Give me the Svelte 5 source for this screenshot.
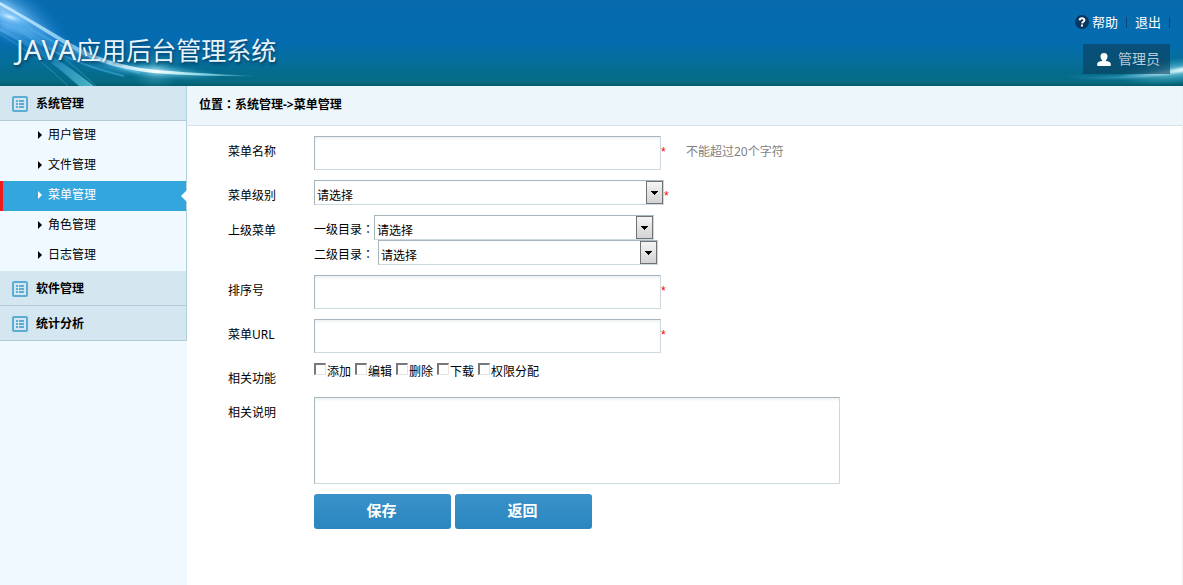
<script>
let groups = [
    { title: "系统管理", items: ["用户管理", "文件管理", "菜单管理", "角色管理", "日志管理"] },
    { title: "软件管理", items: [] },
    { title: "统计分析", items: [] }
];

let actions = ["添加", "编辑", "删除", "下载", "权限分配"];

let current = "菜单管理";
let name = "";
let sort = "";
let url = "";
let remark = "";
let checked = [];
</script>

{#snippet arrow()}
    <svg class="arrow" width="17" height="23" viewBox="0 0 17 23" aria-hidden="true">
        <defs>
            <linearGradient id="arrowFill" x1="0" y1="0" x2="0" y2="1">
                <stop offset="0" stop-color="#f5f5f5" />
                <stop offset="1" stop-color="#d2d2d2" />
            </linearGradient>
        </defs>
        <rect x="0.5" y="0.5" width="16" height="22" fill="url(#arrowFill)" stroke="#6f7377" />
        <path d="M5 10h7v1h-1v1h-1v1h-1v1h-1v-1h-1v-1h-1v-1h-1z" fill="#000" />
    </svg>
{/snippet}

<div class="page">
    <header>
        <svg class="art art-left" width="300" height="86" viewBox="0 0 300 86" aria-hidden="true">
            <defs>
                <radialGradient id="corner">
                    <stop offset="0" stop-color="#d9f3ff" stop-opacity="1" />
                    <stop offset="0.3" stop-color="#7cc4fa" stop-opacity="0.8" />
                    <stop offset="1" stop-color="#1b80d6" stop-opacity="0" />
                </radialGradient>
                <radialGradient id="flare">
                    <stop offset="0" stop-color="#fff" />
                    <stop offset="0.25" stop-color="#9fe6fa" stop-opacity="0.8" />
                    <stop offset="1" stop-color="#28a3c8" stop-opacity="0" />
                </radialGradient>
                <linearGradient id="beam" gradientUnits="userSpaceOnUse" x1="0" y1="0" x2="270" y2="0">
                    <stop offset="0" stop-color="#c5eaff" />
                    <stop offset="0.3" stop-color="#8fd0f2" stop-opacity="0.8" />
                    <stop offset="0.58" stop-color="#f4ffff" />
                    <stop offset="0.78" stop-color="#8de0f0" stop-opacity="0.8" />
                    <stop offset="1" stop-color="#3aa5bd" stop-opacity="0" />
                </linearGradient>
                <linearGradient id="sheet" gradientUnits="userSpaceOnUse" x1="0" y1="10" x2="150" y2="74">
                    <stop offset="0" stop-color="#6bbcff" stop-opacity="0.7" />
                    <stop offset="0.5" stop-color="#2f95dd" stop-opacity="0.45" />
                    <stop offset="1" stop-color="#2aa3cf" stop-opacity="0.3" />
                </linearGradient>
                <linearGradient id="fan" gradientUnits="userSpaceOnUse" x1="0" y1="20" x2="90" y2="86">
                    <stop offset="0" stop-color="#55adf0" stop-opacity="0.8" />
                    <stop offset="0.45" stop-color="#2b8ed0" stop-opacity="0.4" />
                    <stop offset="1" stop-color="#5fcfe2" stop-opacity="0.75" />
                </linearGradient>
                <filter id="soft"><feGaussianBlur stdDeviation="0.7" /></filter>
                <filter id="softer" x="-20%" y="-20%" width="140%" height="140%"><feGaussianBlur stdDeviation="3" /></filter>
            </defs>
            <path d="M0 0Q34 20 62 39Q104 66 156 71Q100 76 50 50Q24 34 0 30z" fill="url(#sheet)" filter="url(#softer)" />
            <ellipse cx="4" cy="12" rx="70" ry="30" fill="url(#corner)" opacity="0.8" transform="rotate(28 4 12)" />
            <ellipse cx="10" cy="17" rx="32" ry="9" fill="url(#corner)" transform="rotate(18 10 17)" />
            <g filter="url(#soft)">
                <path d="M0 28Q40 44 94 86L79 86Q42 52 0 31z" fill="url(#fan)" />
                <path d="M0 34Q38 56 68 86M24 30Q60 52 96 86" fill="none" stroke="#5bbce4" stroke-opacity="0.4" />
                <path d="M20 22Q74 58 140 73M12 24Q56 60 124 76" fill="none" stroke="#4ab4ea" stroke-opacity="0.5" stroke-width="2" />
            </g>
            <ellipse cx="156" cy="71" rx="66" ry="8" fill="url(#flare)" opacity="0.7" transform="rotate(5 156 71)" />
            <ellipse cx="156" cy="71" rx="26" ry="20" fill="url(#flare)" opacity="0.35" />
            <path d="M0 2Q34 21 62 38Q104 65 156 70Q220 75 264 76Q210 77 154 73Q98 68 58 40Q30 22 0 5z" fill="url(#beam)" filter="url(#soft)" />
        </svg>
        <svg class="art art-right" width="123" height="86" viewBox="0 0 123 86" aria-hidden="true">
            <defs>
                <linearGradient id="tail" x1="0" y1="0" x2="1" y2="0">
                    <stop offset="0" stop-color="#2f9cc0" stop-opacity="0" />
                    <stop offset="0.5" stop-color="#52b6d8" stop-opacity="0.7" />
                    <stop offset="1" stop-color="#f2fdff" />
                </linearGradient>
                <radialGradient id="haze">
                    <stop offset="0" stop-color="#8fdcf0" stop-opacity="0.9" />
                    <stop offset="1" stop-color="#3fb0c8" stop-opacity="0" />
                </radialGradient>
                <filter id="softTail"><feGaussianBlur stdDeviation="0.8" /></filter>
            </defs>
            <ellipse cx="118" cy="71" rx="60" ry="13" fill="url(#haze)" transform="rotate(-6 118 71)" />
            <path d="M2 75Q68 80 126 67L126 71Q70 82 2 78z" fill="url(#tail)" filter="url(#softTail)" />
        </svg>
        <h1><span>JAVA</span>应用后台管理系统</h1>
        <div class="top-right">
            <nav class="links">
                <a href="#help">
                    <svg width="14" height="14" viewBox="0 0 14 14" aria-hidden="true">
                        <circle cx="7" cy="7" r="7" fill="#08365f" />
                        <path d="M4.6 5.4C4.7 2.4 9.5 2.500 9.400 5.200C9.300 6.700 7.200 6.800 7.100 8.400" fill="none" stroke="#fff" stroke-width="2" />
                        <rect x="6" y="9.500" width="2" height="2" fill="#fff" />
                    </svg>
                    帮助
                </a>
                <a href="#logout">退出</a>
            </nav>
            <div class="user">
                <svg width="14" height="13" viewBox="0 0 14 13" aria-hidden="true">
                    <path d="M7 0C9.400 0 10.700 1.600 10.500 3.700C10.300 5.500 9.600 6.700 8.900 7.300V8C10.900 8.400 13.800 8.900 13.800 11V12C13.800 12.700 13.400 13 12.800 13H1.200C0.600 13 0.200 12.700 0.200 12V11C0.200 8.900 3.100 8.400 5.100 8V7.300C4.400 6.700 3.700 5.500 3.500 3.700C3.300 1.600 4.600 0 7 0z" fill="#fff" />
                </svg>
                管理员
            </div>
        </div>
    </header>

    <div class="body">
        <aside>
            {#each groups as group}
            <div class="group">
                <div class="group-title">
                    <svg width="16" height="16" viewBox="0 0 16 16" aria-hidden="true">
                        <rect x="1" y="1" width="14" height="14" rx="1" fill="none" stroke="#5badd3" stroke-width="2" />
                        <path d="M4 4h2v2H4zM7 4h5v2H7zM4 7h2v2H4zM7 7h5v2H7zM4 10h2v2H4zM7 10h5v2H7z" fill="#5badd3" />
                    </svg>
                    {group.title}
                </div>
                {#if group.items.length}
                <ul>
                    {#each group.items as item}
                    <li class:active={item == current}>
                        <a href="#menu">
                            <svg width="4" height="8" viewBox="0 0 4 8" aria-hidden="true">
                                <path d="M0 0L4 4L0 8z" fill="currentColor" />
                            </svg>
                            {item}
                        </a>
                    </li>
                    {/each}
                </ul>
                {/if}
            </div>
            {/each}
        </aside>

        <main>
            <div class="place">位置<span class="colon">：</span>系统管理-&gt;菜单管理</div>
            <form onsubmit={(e) => e.preventDefault()}>
                <div class="row">
                    <label class="label" for="name">菜单名称</label>
                    <input class="text" id="name" type="text" bind:value={name} />
                    <span class="star">*</span>
                    <span class="hint">不能超过20个字符</span>
                </div>
                <div class="row">
                    <label class="label" for="level">菜单级别</label>
                    <span class="select wide">
                        <select id="level"><option>请选择</option></select>
                        {@render arrow()}
                    </span>
                    <span class="star">*</span>
                </div>
                <div class="row">
                    <span class="label">上级菜单</span>
                    <div class="parents">
                        <div class="parent">
                            <label for="first">一级目录<span class="colon">：</span></label>
                            <span class="select">
                                <select id="first"><option>请选择</option></select>
                                {@render arrow()}
                            </span>
                        </div>
                        <div class="parent second">
                            <label for="second">二级目录<span class="colon">：</span></label>
                            <span class="select">
                                <select id="second"><option>请选择</option></select>
                                {@render arrow()}
                            </span>
                        </div>
                    </div>
                </div>
                <div class="row">
                    <label class="label" for="sort">排序号</label>
                    <input class="text" id="sort" type="text" bind:value={sort} />
                    <span class="star">*</span>
                </div>
                <div class="row">
                    <label class="label" for="url">菜单URL</label>
                    <input class="text" id="url" type="text" bind:value={url} />
                    <span class="star">*</span>
                </div>
                <div class="row">
                    <span class="label">相关功能</span>
                    <div class="checks">
                        {#each actions as action}
                        <label><input type="checkbox" value={action} bind:group={checked} />{action}</label>
                        {/each}
                    </div>
                </div>
                <div class="row">
                    <label class="label" for="remark">相关说明</label>
                    <textarea id="remark" bind:value={remark}></textarea>
                </div>
                <div class="buttons">
                    <button type="submit">保存</button>
                    <button type="button">返回</button>
                </div>
            </form>
        </main>
    </div>
</div>

<style>
    :global(body) {
        margin: 0;
        background: #fff;
    }

    .page {
        min-height: 100vh;
        display: flex;
        flex-direction: column;
        font-family: "Noto Sans", "Noto Sans CJK SC", sans-serif;
        font-size: 12px;
        line-height: 18px;
        color: #000;
    }

    a {
        color: inherit;
        text-decoration: none;
    }

    svg {
        flex-shrink: 0;
    }

    /* the TC face sets the full-width colon in the middle of its box */
    .colon {
        font-family: "Noto Sans CJK TC", sans-serif;
        line-height: 1;
    }

    /* header */
    header {
        position: relative;
        display: flex;
        justify-content: space-between;
        height: 86px;
        overflow: hidden;
        background: linear-gradient(#066aad 0, #056cb1 40px, #056e9c 60px, #066a82 82px, #045c6c 86px);
    }

    .art {
        position: absolute;
        top: 0;
    }

    .art-left {
        left: 0;
    }

    .art-right {
        right: 0;
    }

    h1 {
        position: relative;
        margin: 0;
        padding: 31px 0 0 16px;
        font-size: 25px;
        line-height: 36px;
        font-weight: normal;
        color: #e8f4fb;
        text-shadow: 1px 2px 3px rgba(0, 30, 60, 0.6);
        white-space: nowrap;
    }

    h1 span {
        font-size: 28px;
        font-kerning: none;
    }

    .top-right {
        position: relative;
        display: flex;
        flex-direction: column;
        align-items: flex-end;
        gap: 13px;
        padding: 13px 13px 0 0;
        color: #fff;
        font-size: 13px;
    }

    .links {
        display: flex;
    }

    .links a {
        display: flex;
        align-items: center;
        gap: 3px;
        padding: 0 9px 0 8px;
        background: linear-gradient(#0a4577, #0a4577) right center / 1px 11px no-repeat;
    }

    .user {
        display: flex;
        align-items: center;
        gap: 7px;
        height: 30px;
        padding: 0 10px 0 14px;
        background: rgba(10, 60, 90, 0.6);
        font-size: 14px;
        color: #b9cad8;
    }

    /* sidebar */
    .body {
        flex: 1;
        display: flex;
    }

    aside {
        width: 187px;
        flex-shrink: 0;
        background: #f0f9ff;
    }

    .group {
        border-right: 1px solid #b0d0dc;
    }

    .group-title {
        display: flex;
        align-items: center;
        gap: 8px;
        height: 32px;
        padding: 2px 0 0 12px;
        border-bottom: 1px solid #b4cbd5;
        background: #d4e7f0;
        font-weight: bold;
    }

    ul {
        margin: 0;
        padding: 0;
        list-style: none;
    }

    li a {
        display: flex;
        align-items: center;
        gap: 6px;
        height: 28px;
        padding: 0 0 2px 38px;
    }

    li.active {
        position: relative;
        background: #33a6dd;
        border-left: 3px solid #ef1c1c;
        color: #fff;
    }

    li.active a {
        padding-left: 35px;
    }

    /* notch pointing into the active item */
    li.active::after {
        content: "";
        position: absolute;
        right: -1px;
        top: 9px;
        border: 6px solid transparent;
        border-left: 0;
        border-right-color: #fff;
    }

    /* content */
    main {
        flex: 1;
        min-width: 0;
        border-right: 1px solid #edf1f3;
    }

    .place {
        height: 39px;
        line-height: 38px;
        padding-left: 12px;
        border-bottom: 1px solid #d5e4eb;
        background: #edf6fb;
        font-weight: bold;
    }

    form {
        display: flex;
        flex-direction: column;
        gap: 10px;
        padding: 10px 0 10px 41px;
    }

    .row {
        display: flex;
        align-items: flex-start;
    }

    .label {
        width: 86px;
        flex-shrink: 0;
        padding-top: 8px;
        line-height: 16px;
    }

    input, select, textarea {
        box-sizing: border-box;
        margin: 0;
        font: inherit;
        color: inherit;
        border: 1px solid;
        border-color: #a7b5bc #ced9df #ced9df #a7b5bc;
        border-radius: 0;
        background: #fff;
        outline: none;
    }

    .text {
        width: 347px;
        height: 34px;
        padding: 0 10px;
    }

    .text, textarea {
        box-shadow: inset 0 3px 4px -2px #e4eaee;
    }

    .star {
        width: 6px;
        padding-top: 8px;
        font-family: "Liberation Sans", sans-serif;
        line-height: 16px;
        color: #f00;
    }

    .hint {
        padding: 8px 0 0 19px;
        line-height: 16px;
        color: #7f7f7f;
    }

    .select {
        position: relative;
        display: flex;
        width: 280px;
    }

    .select.wide {
        width: 350px;
    }

    select {
        appearance: none;
        width: 100%;
        height: 25px;
        padding: 6px 20px 0 2px;
    }

    .arrow {
        position: absolute;
        top: 1px;
        right: 1px;
        pointer-events: none;
    }

    .parent {
        display: flex;
        align-items: flex-start;
    }

    .parent label {
        padding-top: 6px;
    }

    .parent.second {
        gap: 4px;
    }

    .checks {
        display: flex;
        gap: 4px;
    }

    .checks label {
        display: flex;
        align-items: flex-start;
    }

    .checks input {
        appearance: none;
        width: 12px;
        height: 12px;
        margin-right: 1px;
        border-width: 2px 1px 1px 2px;
        border-color: #77787a #e3e3e3 #e3e3e3 #77787a;
    }

    .checks input:checked {
        background: #2c84bf;
    }

    textarea {
        display: block;
        width: 526px;
        height: 87px;
        padding: 8px;
        resize: none;
    }

    .buttons {
        display: flex;
        gap: 4px;
        padding-left: 86px;
    }

    button {
        width: 137px;
        height: 35px;
        padding: 0 2px 5px 0;
        border: 0;
        border-radius: 3px;
        background: linear-gradient(#3a92c8, #2b86c0);
        color: #fff;
        font: bold 15px "Noto Sans CJK SC", sans-serif;
        cursor: pointer;
    }
</style>
